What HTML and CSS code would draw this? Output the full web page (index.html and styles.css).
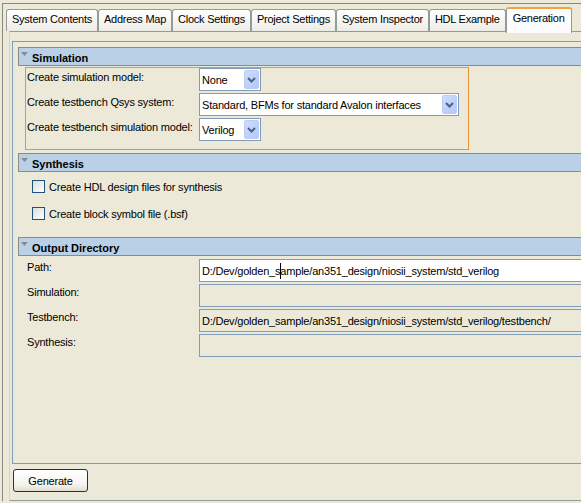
FILE: index.html
```html
<!DOCTYPE html>
<html>
<head>
<meta charset="utf-8">
<link rel="stylesheet" href="styles.css">
</head>
<body>
<div class="window">
  <div class="tabs">
    <div class="tab">System Contents</div>
    <div class="tab">Address Map</div>
    <div class="tab">Clock Settings</div>
    <div class="tab">Project Settings</div>
    <div class="tab">System Inspector</div>
    <div class="tab">HDL Example</div>
    <div class="tab active">Generation</div>
  </div>
  <div class="panel">
    <div class="group">
      <div class="section-head">
        <svg class="tri" width="7" height="4" viewBox="0 0 7 4"><polygon points="0,0 7,0 3.5,4" fill="#8a8a8a"/></svg>
        <span>Simulation</span>
      </div>
      <div class="sim-box">
        <span class="label">Create simulation model:</span>
        <div class="combo short"><span class="combo-text">None</span><span class="combo-btn"><svg width="9" height="6" viewBox="0 0 9 6"><polyline points="1,1 4.5,4.5 8,1" fill="none" stroke="#4d6185" stroke-width="2"/></svg></span></div>
        <span class="label">Create testbench Qsys system:</span>
        <div class="combo long"><span class="combo-text">Standard, BFMs for standard Avalon interfaces</span><span class="combo-btn"><svg width="9" height="6" viewBox="0 0 9 6"><polyline points="1,1 4.5,4.5 8,1" fill="none" stroke="#4d6185" stroke-width="2"/></svg></span></div>
        <span class="label">Create testbench simulation model:</span>
        <div class="combo short"><span class="combo-text">Verilog</span><span class="combo-btn"><svg width="9" height="6" viewBox="0 0 9 6"><polyline points="1,1 4.5,4.5 8,1" fill="none" stroke="#4d6185" stroke-width="2"/></svg></span></div>
      </div>

      <div class="section-head gap">
        <svg class="tri" width="7" height="4" viewBox="0 0 7 4"><polygon points="0,0 7,0 3.5,4" fill="#8a8a8a"/></svg>
        <span>Synthesis</span>
      </div>
      <div class="checks">
        <div class="check"><span class="box"></span><span>Create HDL design files for synthesis</span></div>
        <div class="check"><span class="box"></span><span>Create block symbol file (.bsf)</span></div>
      </div>

      <div class="section-head">
        <svg class="tri" width="7" height="4" viewBox="0 0 7 4"><polygon points="0,0 7,0 3.5,4" fill="#8a8a8a"/></svg>
        <span>Output Directory</span>
      </div>
      <div class="out-grid">
        <span class="label">Path:</span>
        <div class="field"><span>D:/Dev/golden_s</span><span class="caret"></span><span>ample/an351_design/niosii_system/std_verilog</span></div>
        <span class="label">Simulation:</span>
        <div class="field disabled"></div>
        <span class="label">Testbench:</span>
        <div class="field disabled"><span>D:/Dev/golden_sample/an351_design/niosii_system/std_verilog/testbench/</span></div>
        <span class="label">Synthesis:</span>
        <div class="field disabled"></div>
      </div>
    </div>
    <div class="footer">
      <button class="btn">Generate</button>
    </div>
  </div>
</div>
</body>
</html>
```

FILE: styles.css
```css
html, body {
  margin: 0;
  padding: 0;
  height: 100%;
  overflow: hidden;
}
body {
  background: #ece9d8;
  font-family: "Liberation Sans", Arial, sans-serif;
  font-size: 11px;
  letter-spacing: -0.2px;
  color: #000;
}
.window {
  margin: 3px 0 0 2px;
  width: 720px;
  border-top: 1px solid #8a887f;
  border-left: 1px solid #8a887f;
}
.tabs {
  display: flex;
  align-items: flex-end;
  padding: 3px 0 0 3px;
  height: 24px;
}
.tab {
  box-sizing: border-box;
  height: 22px;
  padding: 3px 5px 0 5px;
  line-height: 13px;
  letter-spacing: -0.25px;
  border: 1px solid #919b9c;
  border-bottom: none;
  border-radius: 3px 3px 0 0;
  background: linear-gradient(#ffffff, #f6f5f0 55%, #ecebe5);
  white-space: nowrap;
}
.tab.active {
  position: relative;
  z-index: 1;
  height: 26px;
  margin-bottom: -2px;
  padding: 3px 6px 0 6px;
  border-top: 2px solid #f1a43b;
  background: #fcfcfe;
}
.panel {
  box-sizing: border-box;
  height: 470px;
  margin-left: 6px;
  border-top: 1px solid #919b9c;
  border-left: 1px solid #d6d3c4;
  border-bottom: 1px solid #919b9c;
  padding: 9px 0 0 2px;
  display: flex;
  flex-direction: column;
}
.group {
  flex: 1;
  border: 1px solid #7f9db9;
  border-right: none;
  padding: 5px 0 0 5px;
}
.section-head {
  box-sizing: border-box;
  height: 19px;
  display: flex;
  align-items: center;
  padding: 2px 0 0 2px;
  background: #b9d0e7;
  border: 1px solid #8a8a8a;
  border-right: none;
  font-weight: bold;
  letter-spacing: 0;
  white-space: nowrap;
}
.section-head.gap {
  margin-top: 3px;
}
.tri {
  align-self: flex-start;
  margin-top: 2px;
  margin-right: 4px;
}
.sim-box {
  box-sizing: border-box;
  width: 444px;
  margin: 1px 0 0 7px;
  border: 1px solid #e8953a;
  padding: 0 0 8px 1px;
  display: grid;
  grid-template-columns: 172px auto;
  row-gap: 2px;
  justify-items: start;
}
.label {
  padding-top: 3px;
  line-height: 13px;
  white-space: nowrap;
}
.combo {
  box-sizing: border-box;
  height: 23px;
  border: 1px solid #7f9db9;
  background: #fff;
  display: flex;
  align-items: center;
  justify-content: space-between;
  padding-left: 2px;
  white-space: nowrap;
}
.combo.short { width: 62px; }
.combo.long { width: 260px; }
.combo-btn {
  box-sizing: border-box;
  width: 15px;
  height: 19px;
  margin-right: 1px;
  border: 1px solid #bccbf3;
  border-radius: 2px;
  background: linear-gradient(135deg, #d0dcfb, #b3c7f8);
  display: flex;
  align-items: center;
  justify-content: center;
}
.checks {
  padding: 8px 0 17px 14px;
  display: flex;
  flex-direction: column;
  gap: 14px;
}
.check {
  display: flex;
  align-items: center;
  height: 13px;
  gap: 4px;
  white-space: nowrap;
}
.box {
  box-sizing: border-box;
  width: 13px;
  height: 13px;
  border: 1px solid #1c5180;
  background: linear-gradient(135deg, #dcdcd7, #ffffff);
}
.out-grid {
  margin-top: 3px;
  padding-left: 9px;
  display: grid;
  grid-template-columns: 172px 440px;
  row-gap: 2px;
}
.out-grid .label {
  padding-top: 2px;
}
.field {
  box-sizing: border-box;
  height: 23px;
  border: 1px solid #7f9db9;
  background: #fff;
  display: flex;
  align-items: center;
  padding: 1px 0 0 2px;
  white-space: nowrap;
}
.field.disabled {
  background: #ece9d8;
}
.caret {
  width: 0;
  height: 16px;
  border-left: 1px solid #000;
  margin-right: -1px;
}
.footer {
  padding: 5px 0 8px 1px;
}
.btn {
  box-sizing: border-box;
  display: block;
  width: 75px;
  height: 23px;
  margin: 0;
  border: 1px solid #003c74;
  border-radius: 3px;
  background: linear-gradient(#ffffff, #f4f3ee 70%, #e0ddd3);
  font-family: "Liberation Sans", Arial, sans-serif;
  font-size: 11px;
  letter-spacing: -0.2px;
  color: #000;
  padding: 0;
}
```
